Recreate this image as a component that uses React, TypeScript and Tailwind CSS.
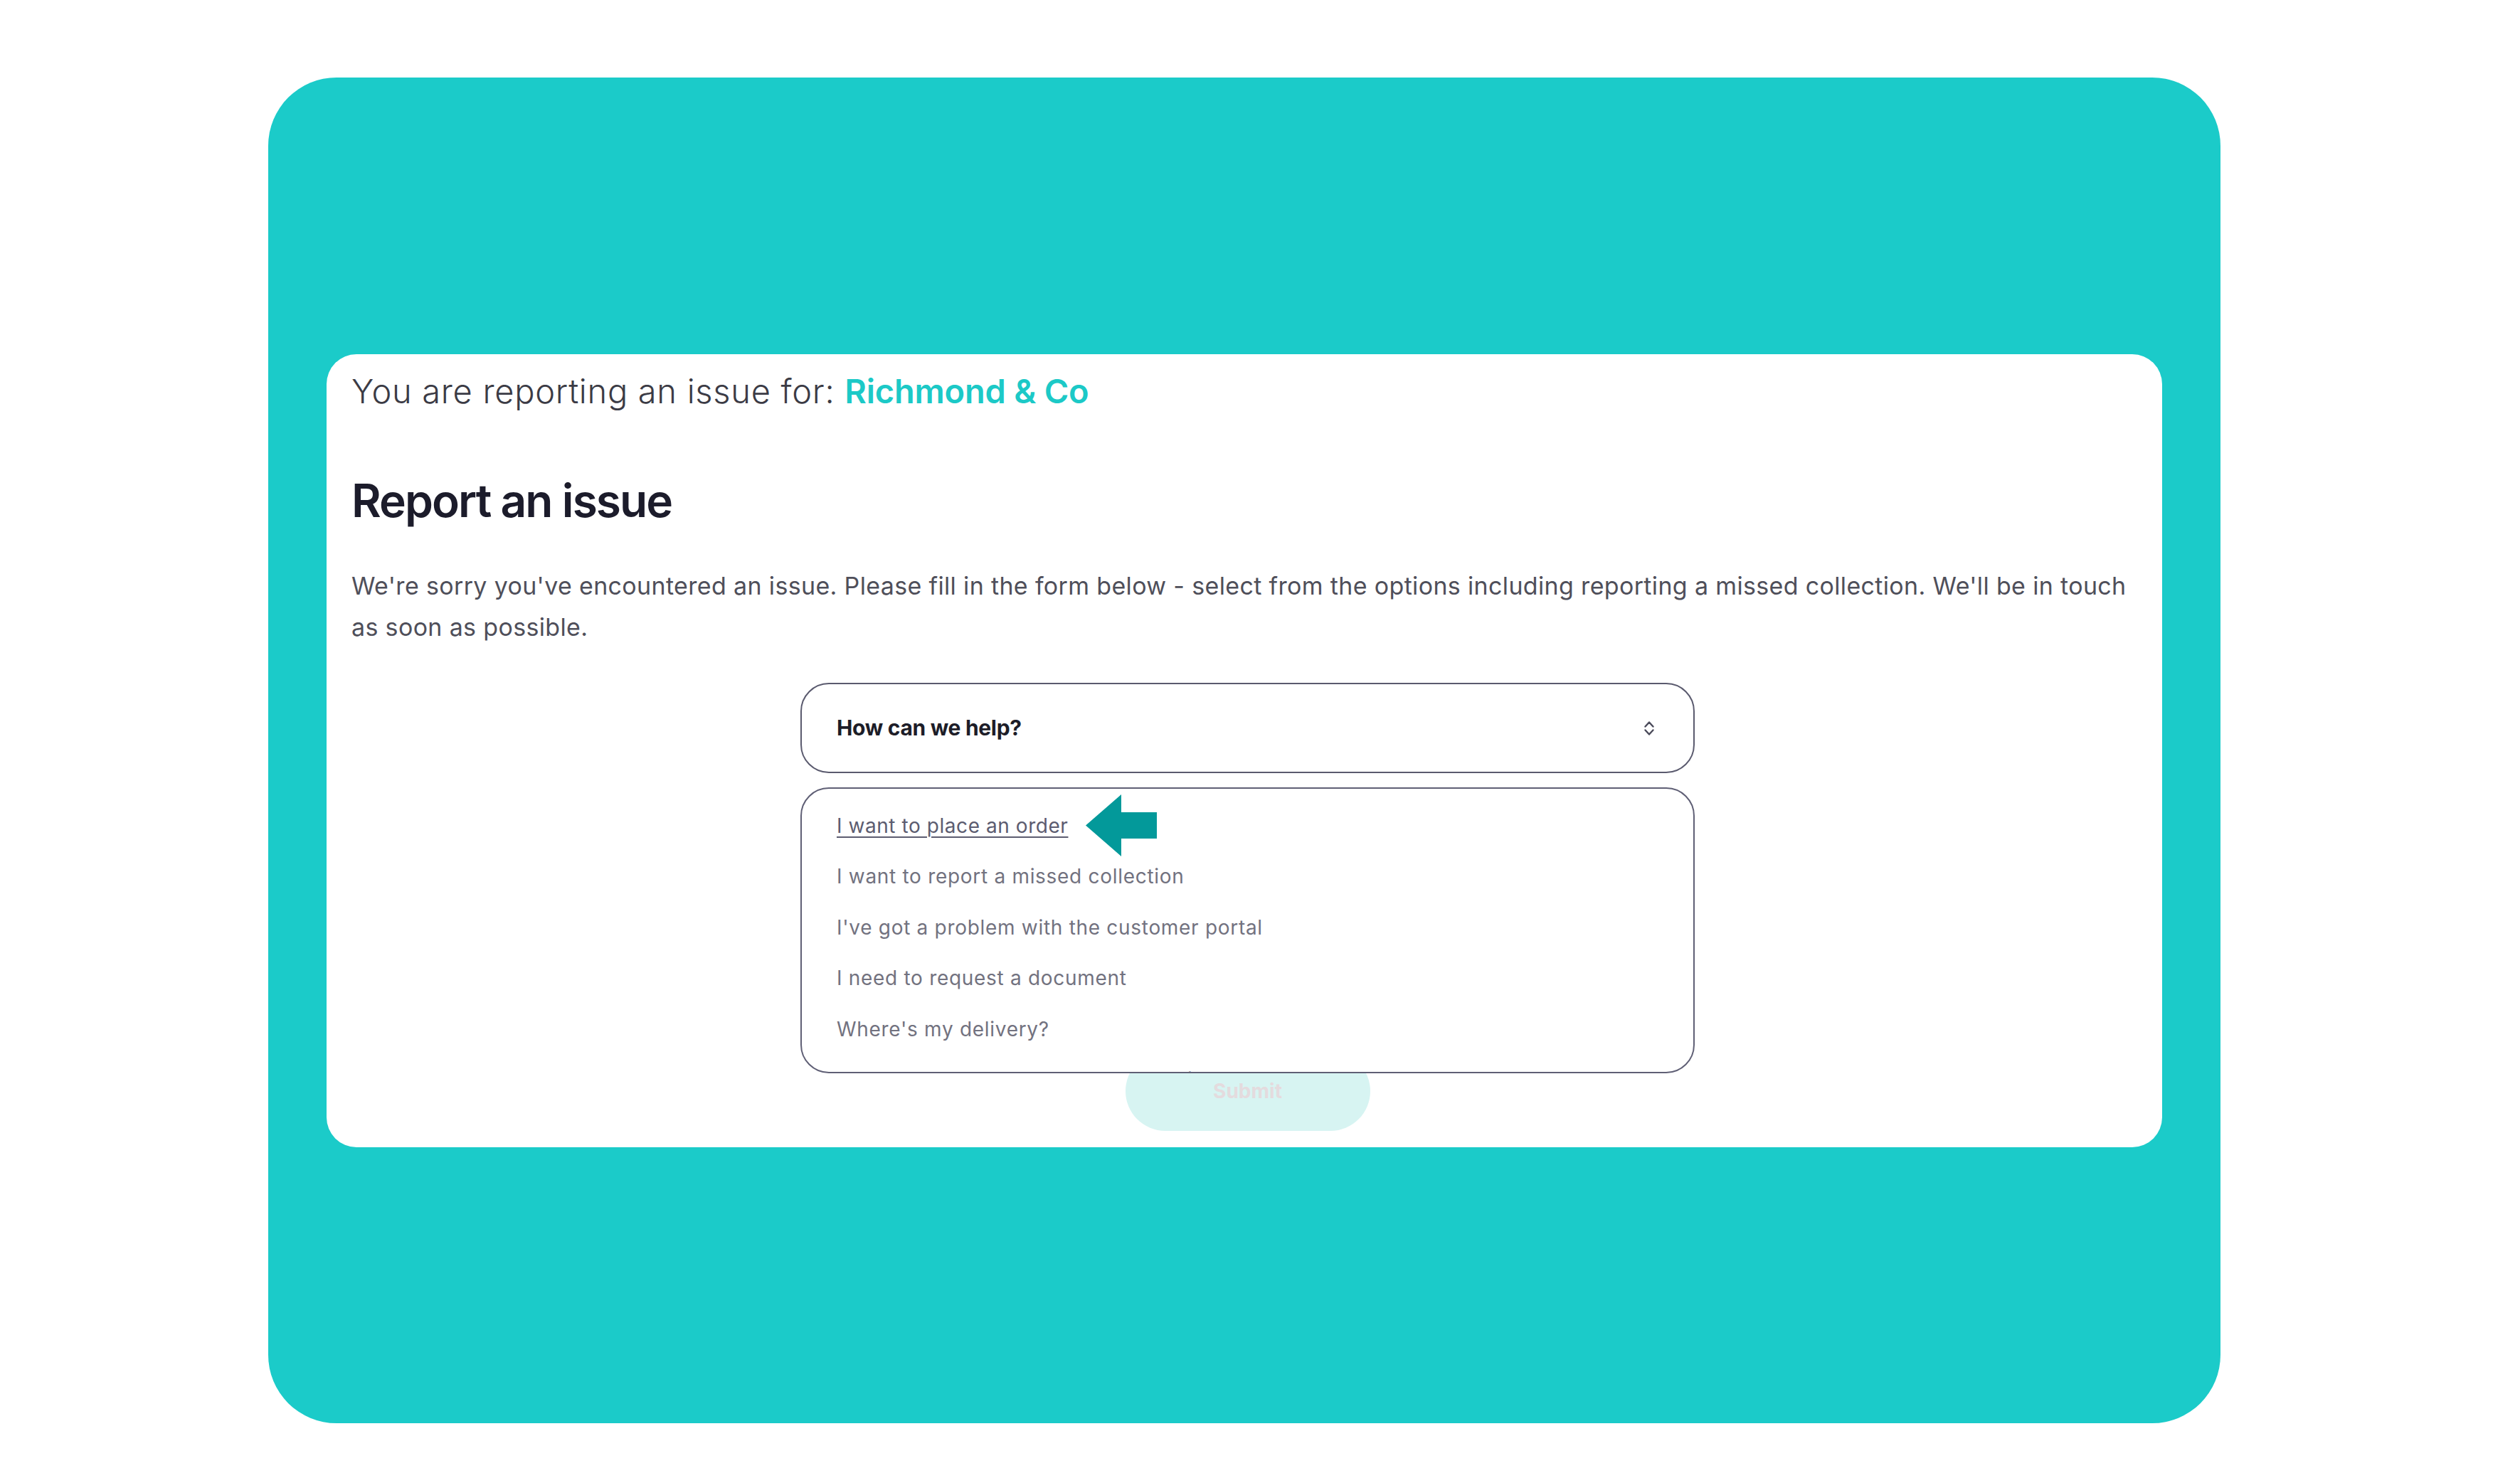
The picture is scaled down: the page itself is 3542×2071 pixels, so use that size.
import React from "react";

const options = [
  "I want to place an order",
  "I want to report a missed collection",
  "I've got a problem with the customer portal",
  "I need to request a document",
  "Where's my delivery?",
  "I want to make a change to my service",
];

function Chevrons() {
  return (
    <svg width="16" height="24" viewBox="0 0 16 24" fill="none" stroke="#4a4a5a" strokeWidth="2.4" strokeLinecap="round" strokeLinejoin="round">
      <path d="M2.5 9.5 L8 3.5 L13.5 9.5" />
      <path d="M2.5 14.5 L8 20.5 L13.5 14.5" />
    </svg>
  );
}

function Arrow() {
  return (
    <svg width="100" height="87" viewBox="0 0 100 87">
      <polygon points="0,43.5 50,0 50,25 100,25 100,62 50,62 50,87" fill="#03999a" />
    </svg>
  );
}

export default function App() {
  return (
    <div
      className="w-[3542px] h-[2071px] bg-white pt-[109px] pl-[377px]"
      style={{ fontFamily: "Inter, 'Noto Sans', sans-serif" }}
    >
      <div className="w-[2744px] h-[1892px] rounded-[96px] bg-[#1bcbc9] pt-[389px] px-[82px]">
        <div className="bg-white rounded-[42px] h-[1115px] px-[35px] pt-[23px]">
          <p className="text-[47px] leading-[57px] font-light text-[#3b3b45] tracking-[0.015em] whitespace-nowrap">
            You are reporting an issue for:{" "}
            <span className="font-semibold text-[#1cc9c7] tracking-[-0.005em]">Richmond &amp; Co</span>
          </p>
          <h1 className="mt-[87px] text-[64px] leading-[78px] font-semibold text-[#1c1c2b] tracking-[-0.03em]">
            Report an issue
          </h1>
          <p className="mt-[52px] text-[34px] leading-[57.6px] text-[#4f4f5a] tracking-[0.01em] whitespace-nowrap">
            We're sorry you've encountered an issue. Please fill in the form below - select from the options including reporting a missed collection. We'll be in touch
            <br />
            as soon as possible.
          </p>

          <div className="mt-[50px] ml-[631px] w-[1257px] flex flex-col items-center">
            <div className="relative w-full">
              <div className="w-full h-[127px] rounded-[40px] border-2 border-[#5a5a6e] flex items-center justify-between pl-[49px] pr-[54px]">
                <span className="text-[30px] font-bold text-[#1d1d28] tracking-[-0.01em]">How can we help?</span>
                <Chevrons />
              </div>

              <div className="absolute left-0 top-[147px] z-10 w-full h-[402px] rounded-[40px] border-2 border-[#5f5f75] bg-white overflow-hidden pt-[16px] pl-[49px]">
                {options.map((o, i) => (
                  <div key={o} className="h-[71.5px] flex items-center gap-[25px]">
                    <span
                      className={
                        i === 0
                          ? "text-[28px] text-[#5c5c70] underline underline-offset-[5px] decoration-[2px] tracking-[0.02em] whitespace-nowrap"
                          : "text-[28px] text-[#72727f] tracking-[0.025em] whitespace-nowrap"
                      }
                    >
                      {o}
                    </span>
                    {i === 0 && <Arrow />}
                  </div>
                ))}
              </div>
            </div>

            <button className="mt-[391px] w-[344px] h-[112px] rounded-full bg-[#d7f4f2] text-[28px] font-bold text-[#e4dbde]">
              Submit
            </button>
          </div>
        </div>
      </div>
    </div>
  );
}
